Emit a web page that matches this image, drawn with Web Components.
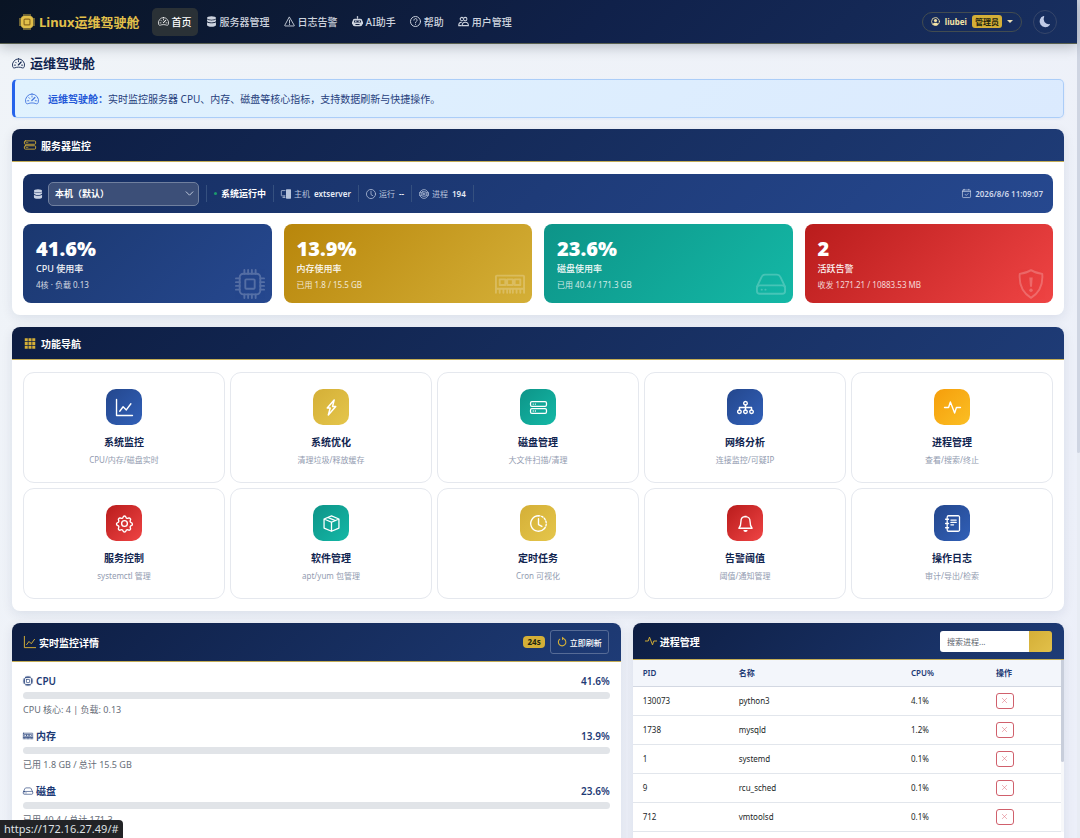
<!DOCTYPE html>
<html lang="zh-CN">
<head>
<meta charset="utf-8">
<meta name="viewport" content="width=device-width, initial-scale=1">
<title>Linux运维驾驶舱</title>
<style>
  html, body { margin: 0; height: 100%; }
  body {
    font-family: "Noto Sans", "Noto Sans CJK SC", sans-serif;
    font-size: 10px;
    color: #10244f;
    --g-blue: linear-gradient(135deg, #24478d, #3160b8);
    --g-gold: linear-gradient(135deg, #d4af37, #e5c64b);
    --g-teal: linear-gradient(135deg, #0d9488, #14b8a6);
    --g-red: linear-gradient(135deg, #b91c1c, #ef4444);
    --g-amber: linear-gradient(135deg, #f59e0b, #fbbf24);
  }
</style>
</head>
<body>
<app-shell>
  <top-nav slot="nav"></top-nav>
  <note-title><ui-icon name="speedometer"></ui-icon>运维驾驶舱</note-title>
  <note-banner><ui-icon slot="icon" name="speedometer"></ui-icon><strong>运维驾驶舱：</strong>实时监控服务器 CPU、内存、磁盘等核心指标，支持数据刷新与快捷操作。</note-banner>

  <page-panel icon="stack">
    <span slot="title">服务器监控</span>
    <status-bar></status-bar>
    <card-grid kind="stats">
      <stat-card tone="blue" icon="cpu"><span slot="value">41.6%</span><span slot="label">CPU 使用率</span><span slot="sub">4核 · 负载 0.13</span></stat-card>
      <stat-card tone="gold" icon="memory"><span slot="value">13.9%</span><span slot="label">内存使用率</span><span slot="sub">已用 1.8 / 15.5 GB</span></stat-card>
      <stat-card tone="teal" icon="hdd"><span slot="value">23.6%</span><span slot="label">磁盘使用率</span><span slot="sub">已用 40.4 / 171.3 GB</span></stat-card>
      <stat-card tone="red" icon="shield"><span slot="value">2</span><span slot="label">活跃告警</span><span slot="sub">收发 1271.21 / 10883.53 MB</span></stat-card>
    </card-grid>
  </page-panel>

  <page-panel icon="grid">
    <span slot="title">功能导航</span>
    <card-grid kind="features">
      <feature-card tone="blue" icon="graph">系统监控<span slot="desc">CPU/内存/磁盘实时</span></feature-card>
      <feature-card tone="gold" icon="lightning">系统优化<span slot="desc">清理垃圾/释放缓存</span></feature-card>
      <feature-card tone="teal" icon="stack">磁盘管理<span slot="desc">大文件扫描/清理</span></feature-card>
      <feature-card tone="blue" icon="diagram">网络分析<span slot="desc">连接监控/可疑IP</span></feature-card>
      <feature-card tone="amber" icon="activity">进程管理<span slot="desc">查看/搜索/终止</span></feature-card>
      <feature-card tone="red" icon="gear">服务控制<span slot="desc">systemctl 管理</span></feature-card>
      <feature-card tone="teal" icon="box">软件管理<span slot="desc">apt/yum 包管理</span></feature-card>
      <feature-card tone="gold" icon="history">定时任务<span slot="desc">Cron 可视化</span></feature-card>
      <feature-card tone="red" icon="bell">告警阈值<span slot="desc">阈值/通知管理</span></feature-card>
      <feature-card tone="blue" icon="journal">操作日志<span slot="desc">审计/导出/检索</span></feature-card>
    </card-grid>
  </page-panel>

  <split-row>
    <page-panel icon="graph" size="tall">
      <span slot="title">实时监控详情</span>
      <refresh-tools slot="tools"></refresh-tools>
      <metric-row icon="cpu">CPU<span slot="value">41.6%</span><span slot="desc">CPU 核心: 4 | 负载: 0.13</span></metric-row>
      <metric-row icon="memory">内存<span slot="value">13.9%</span><span slot="desc">已用 1.8 GB / 总计 15.5 GB</span></metric-row>
      <metric-row icon="hdd">磁盘<span slot="value">23.6%</span><span slot="desc">已用 40.4 / 总计 171.3</span></metric-row>
    </page-panel>
    <page-panel icon="activity" size="medium" flush>
      <span slot="title">进程管理</span>
      <process-search slot="tools"></process-search>
      <process-table></process-table>
    </page-panel>
  </split-row>
  <span slot="hint">https://172.16.27.49/#</span>
</app-shell>

<script>
const line = (body, w = 1) => `<g fill="none" stroke="currentColor" stroke-width="${w}" stroke-linecap="round" stroke-linejoin="round">${body}</g>`;
const cpuPins = '<path d="M5 .5v2M7 .5v2M9 .5v2M11 .5v2M5 13.500v2M7 13.500v2M9 13.500v2M11 13.500v2M.5 5h2M.5 7h2M.5 9h2M.5 11h2M13.500 5h2M13.500 7h2M13.500 9h2M13.500 11h2"/>';
const ICONS = {
  speedometer: line('<path d="M8 2.300A7.400 7.400 0 0 0 .9 12c.3 1.300 1.600 1.800 2.700 1.300 1.400-.6 2.900-.8 4.400-.8s3 .2 4.400.8c1.100.5 2.400 0 2.700-1.300A7.400 7.400 0 0 0 8 2.300zM8 4.500v1.300M3 10h1.300M11.700 10H13M4.400 6.400l.9.900"/><path d="M11.300 6.200 7.800 9.800" stroke-width="1.500"/>', 1.1),
  'cpu-fill': '<rect x="2" y="2" width="12" height="12" rx="3"/>' + line(cpuPins) + '<rect x="4.500" y="4.500" width="7" height="7" rx="1.500" fill="#8d6a1e"/><rect x="5.700" y="5.700" width="4.600" height="4.600" rx=".5"/>',
  cpu: line(cpuPins + '<rect x="2.500" y="2.500" width="11" height="11" rx="2"/><rect x="5.500" y="5.500" width="5" height="5" rx=".5"/>'),
  database: '<ellipse cx="8" cy="3" rx="6.500" ry="2.500"/><path d="M1.500 4.800C2.700 6 5.300 6.500 8 6.500S13.300 6 14.500 4.800V7c0 1.400-2.900 2.500-6.500 2.500S1.500 8.400 1.500 7z"/><path d="M1.500 9c1.200 1.200 3.800 1.600 6.500 1.600s5.300-.4 6.500-1.600v4c0 1.600-2.900 2.700-6.500 2.700S1.500 14.600 1.500 13z"/>',
  warning: line('<path d="M8 1.800 15 13.800a.5.5 0 0 1-.4.700H1.400a.5.500 0 0 1-.4-.7z"/><path d="M8 6v4.500M8 12.300v.2"/>', 1.3),
  robot: '<path d="M8.500 2.400V4H12a3 3 0 0 1 3 3v1h1v4h-1a3 3 0 0 1-3 3H4a3 3 0 0 1-3-3H0V8h1V7a3 3 0 0 1 3-3h3.500V2.400a1.200 1.200 0 1 1 1 0z"/><path d="M3 6.500h10v3H3zM5 11.500h6v1.500H5z" fill="#122142"/><circle cx="5.500" cy="8" r="1"/><circle cx="10.500" cy="8" r="1"/>',
  question: line('<circle cx="8" cy="8" r="7.300"/><path d="M5.700 6a2.300 2.300 0 1 1 3.500 2c-.8.500-1.200.9-1.200 1.800M8 12v.2"/>', 1.4),
  people: line('<circle cx="10.500" cy="4.500" r="2.500"/><path d="M6 14c0-3 1.500-5 4.500-5s4.700 2 4.700 5zM6.500 6.500A2.300 2.300 0 1 1 7.300 3M4.500 14H1c0-3 1.300-4.700 4-4.900"/>', 1.5),
  person: line('<circle cx="8" cy="8" r="7"/>', 1.5) + '<circle cx="8" cy="6.200" r="2.800"/><path d="M3 12.800C4 10.800 5.700 10 8 10s4 .8 5 2.800A7 7 0 0 1 8 15a7 7 0 0 1-5-2.200z"/>',
  moon: '<path d="M6 .3a.8.800 0 0 1 .1.900 7.200 7.200 0 0 0 7.400 10.600.8.800 0 0 1 .8 1.200A8.300 8.300 0 1 1 5.100.1.800.800 0 0 1 6 .3z"/>',
  stack: line('<rect x=".5" y="2.500" width="15" height="4.500" rx="1.300"/><rect x=".5" y="9" width="15" height="4.500" rx="1.300"/><path d="M3 4.800h.1M5 4.800h.1M3 11.300h.1M5 11.300h.1"/>', 1.2),
  grid: '<path d="M1 1.500h4v4H1zM6 1.500h4v4H6zM11 1.500h4v4h-4zM1 6.500h4v4H1zM6 6.500h4v4H6zM11 6.500h4v4h-4zM1 11.500h4v4H1zM6 11.500h4v4H6zM11 11.500h4v4h-4z"/>',
  graph: line('<path d="M.5.5v15h15M3.500 11.500l3.200-4.200 3 3L14 4.500"/>', 1.3),
  lightning: line('<path d="M10.500 1 4 8.500h2.800L5 15l7-8H9z"/>', 1.400),
  diagram: line('<circle cx="8" cy="4" r="1.700"/><circle cx="2.300" cy="12" r="1.700"/><circle cx="8" cy="12" r="1.700"/><circle cx="13.700" cy="12" r="1.700"/><path d="M8 5.700v4.600M2.300 10V8h11.400v2"/>', 1.3),
  activity: line('<path d="M.5 8h3.800L6 2.800l4 10.400L11.700 8h3.800"/>', 1.300),
  gear: line('<circle cx="8" cy="8" r="2.700"/><path d="M6.600 2.200c.4-1.600 2.400-1.600 2.800 0a1.400 1.400 0 0 0 2.100.8c1.400-.8 2.900.7 2 2.100a1.400 1.400 0 0 0 .8 2.100c1.500.4 1.500 2.400 0 2.800a1.400 1.400 0 0 0-.8 2c.8 1.400-.7 2.900-2.100 2a1.400 1.400 0 0 0-2 .9c-.4 1.500-2.400 1.500-2.800 0a1.400 1.400 0 0 0-2.100-.9c-1.400.9-2.900-.6-2-2a1.400 1.400 0 0 0-.9-2.100c-1.500-.4-1.500-2.400 0-2.800a1.400 1.400 0 0 0 .9-2c-.9-1.400.6-2.900 2-2.100a1.400 1.400 0 0 0 2.100-.8z"/>', 1.3),
  box: line('<path d="M8 .8 15 3.800v8.500l-7 3-7-3V3.800zM1 3.800l7 3 7-3M8 6.800v8.500M4.500 2.300l7 3"/>', 1.2),
  clock: line('<circle cx="8" cy="8" r="7.300"/><path d="M8 3.500V9l3 1.700"/>', 1.2),
  history: line('<path d="M8 .7a7.300 7.300 0 1 0 5.500 12.100M8 3.500V9l3.200 1.800"/><path d="M8 .7a7.300 7.300 0 0 1 5.500 12.100" stroke-dasharray="1.400 1.600"/>', 1.3),
  bell: line('<path d="M8 1.500c-2.700 0-4.300 2-4.300 4.500 0 4-1 5.500-1.900 6.500h12.400c-.9-1-1.900-2.500-1.900-6.500 0-2.500-1.600-4.500-4.300-4.500z"/>', 1.3) + '<path d="M6 14h4a2 2 0 0 1-4 0zM7 .8h2V2H7z"/>',
  journal: line('<path d="M3 3V2a1.300 1.300 0 0 1 1.300-1.300h9A1.300 1.300 0 0 1 14.600 2v12a1.300 1.300 0 0 1-1.300 1.300h-9A1.300 1.300 0 0 1 3 14v-1M3 5v2M3 9v2M1.500 4h2.800M1.500 8h2.800M1.500 12h2.800M6.500 4.800h5M6.500 7h5M6.500 9.200h2.500"/>', 1.2),
  memory: line('<path d="M1 3.500h14a.5.500 0 0 1 .5.500v6.500H.5V4a.5.500 0 0 1 .5-.5zM2.500 5.500h3v3h-3zM6.500 5.500h3v3h-3zM10.500 5.500h3v3h-3zM.5 10.500v2.200M2.500 10.500v2.200M4.500 10.500v2.200M6.500 10.500v2.200M8 10.500v2.200M9.500 10.500v2.200M11.500 10.500v2.200M13.500 10.500v2.200M15.500 10.500v2.200"/>', 1),
  hdd: line('<path d="M.6 9.300 3 4.200A2 2 0 0 1 4.800 3h6.400A2 2 0 0 1 13 4.200l2.400 5.100"/><rect x=".5" y="8.700" width="15" height="4.500" rx="1.500"/><path d="M3 11h.1M5 11h.1"/>', 1),
  shield: line('<path d="M8 .6c-1.500 1-3.800 1.700-6 2-.5 5.700 1.200 9.800 6 12.800 4.800-3 6.500-7.100 6-12.800-2.200-.3-4.500-1-6-2z"/>', 1) + '<path d="M7.100 4.500h1.800l-.4 5h-1z"/><circle cx="8" cy="11.300" r=".9"/>',
  pc: '<path d="M8 1.500A1 1 0 0 1 9 .5h6a1 1 0 0 1 1 1v13a1 1 0 0 1-1 1H9a1 1 0 0 1-1-1z"/>' + line('<path d="M6.500 2.500H1.200a.7.700 0 0 0-.7.700v7.100c0 .4.300.7.700.7h5.300M5 11v2.500M3 13.500h3.500"/>', 1.2),
  process: line('<circle cx="8" cy="8" r="7"/><path d="M1 6h3M1 10h3M12 6h3M12 10h3"/><rect x="4.500" y="4.500" width="7" height="7" rx="1.500"/><rect x="7" y="7" width="2" height="2"/>', 1.2),
  calendar: line('<rect x=".8" y="1.800" width="14.400" height="13.400" rx="1.500"/><path d="M1 4.500h14M4 .5v1.300M12 .5v1.300M5.500 9.500l2 2 3.500-3.500"/>', 1.2),
  refresh: line('<path d="M4.500 3.500A6 6 0 1 0 12 3.600"/>', 1.7) + '<path d="M8-.6v5.600l4.200-2.800z"/>',
  x: line('<path d="M3 3l10 10M13 3 3 13"/>', 1.2),
  chevron: line('<path d="M2 5l6 6 6-6"/>', 1.600)
};

/* Base class: clones a template made from the markup each subclass supplies. */
class Base extends HTMLElement {
  constructor() {
    super();
    this.attachShadow({ mode: 'open' });
  }
  connectedCallback() {
    if (this.shadowRoot.childNodes.length) return;
    const t = document.createElement('template');
    t.innerHTML = `<style>*{box-sizing:border-box}:host{display:block;box-sizing:border-box}${this.css()}</style>${this.html()}`;
    this.shadowRoot.append(t.content.cloneNode(true));
  }
  css() { return ''; }
  html() { return '<slot></slot>'; }
}
const define = (name, css, html) => customElements.define(name, class extends Base {
  css() { return css; }
  html() { return typeof html === 'function' ? html(this) : (html || '<slot></slot>'); }
});

define('ui-icon', `:host{display:inline-flex;flex:none;width:var(--icon,11px);height:var(--icon,11px)}
  svg{width:100%;height:100%;overflow:visible}`,
  e => `<svg viewBox="0 0 16 16" fill="currentColor" aria-hidden="true">${ICONS[e.getAttribute('name')]}</svg>`);

define('app-shell', `
  :host{display:grid;grid-template:auto minmax(0,1fr)/minmax(0,1fr) 3px;height:100vh;overflow:hidden;position:relative;background:linear-gradient(135deg,#f0f4f8,#eceff9)}
  main{grid-row:2;grid-column:1;overflow:hidden;padding:0 13px 0 12px;display:flex;flex-direction:column}
  .rail{grid-row:1/3;grid-column:2;background:#e8ecf4}
  .thumb{height:54%;background:#cfd5e2;border-radius:0 0 2px 2px}
  .hint{position:absolute;left:0;bottom:0;background:#222326;color:#dfe1e4;font-size:11px;line-height:18px;padding:0 4px;border-radius:0 4px 0 0}`,
  `<slot name="nav"></slot><main><slot></slot></main><div class="rail"><div class="thumb"></div></div><div class="hint"><slot name="hint"></slot></div>`);

define('top-nav', `
  :host{background:linear-gradient(135deg,#091424 0%,#10214a 55%,#182f60 100%);border-bottom:1px solid #59604f;box-shadow:0 3px 12px rgba(10,22,40,.25);position:relative;z-index:1}
  header{display:flex;align-items:center;height:43px;padding:0 20px 0 19px}
  a{text-decoration:none;color:inherit}
  .brand{display:flex;align-items:center;gap:4px;font-size:13px;font-weight:700;color:#e2c04a;--icon:16px;margin-right:12px;white-space:nowrap}
  nav{display:flex;gap:2px}
  nav a{display:flex;align-items:center;gap:3px;height:28px;padding:0 6px;border-radius:5px;color:#cdd3de;font-weight:500;white-space:nowrap}
  nav a[aria-current]{background:#2a3136;color:#fff}
  .right{margin-left:auto;display:flex;align-items:center;gap:11px}
  button{font:inherit;background:none;padding:0;margin:0}
  .user{display:flex;align-items:center;gap:5px;height:20px;padding:0 8px;border:1px solid #424c50;border-radius:10px;color:#f3e3a6;font-size:8px;font-weight:700;--icon:9px}
  .user b{background:#d4af37;color:#20240f;border-radius:3px;padding:0 3px;line-height:13px;font-weight:700}
  .caret{border:3px solid transparent;border-top-color:#e9dfb8;border-bottom:0}
  .theme{width:24px;height:24px;border:1px solid #36466a;border-radius:50%;color:#c0cbe6;display:grid;place-items:center;--icon:11px}`,
  () => {
    const items = [['speedometer', '首页'], ['database', '服务器管理'], ['warning', '日志告警'], ['robot', 'AI助手'], ['question', '帮助'], ['people', '用户管理']];
    return `<header><a class="brand" href="#"><ui-icon name="cpu-fill"></ui-icon><span>Linux运维驾驶舱</span></a>
      <nav>${items.map(([i, t], n) => `<a href="#"${n ? '' : ' aria-current="page"'}><ui-icon name="${i}"></ui-icon><span>${t}</span></a>`).join('')}</nav>
      <div class="right"><button class="user" type="button"><ui-icon name="person"></ui-icon><span>liubei</span><b>管理员</b><i class="caret"></i></button>
      <button class="theme" type="button" aria-label="切换主题"><ui-icon name="moon"></ui-icon></button></div></header>`;
  });

define('note-title', `
  :host{flex:none}
  h1{margin:10px 0 6px;display:flex;align-items:center;gap:5px;font-size:13px;line-height:19px;font-weight:600;color:#10244f;--icon:13px}`,
  `<h1><slot></slot></h1>`);

define('note-banner', `
  :host{display:flex;flex:none;align-items:center;gap:9px;min-height:39px;padding:0 11px 0 10px;margin-bottom:11px;border:1px solid #abcdf8;border-left:3px solid #2563eb;border-radius:5px;background:linear-gradient(135deg,#e0f2fe,#dbeafe);color:#27407c;--icon:14px;box-shadow:0 1px 3px rgba(37,99,235,.08)}
  ::slotted(ui-icon){color:#4a7be0}
  ::slotted(strong){color:#2358d8;font-weight:700}`,
  `<slot name="icon"></slot><div><slot></slot></div>`);

define('page-panel', `
  :host{background:#fff;border-radius:8px;box-shadow:0 3px 12px rgba(16,36,79,.09);overflow:hidden;margin-bottom:12px;flex:none;min-width:0}
  header{display:flex;align-items:center;height:33px;padding:0 12px;background:linear-gradient(135deg,#0d1d42,#1e3b76);border-bottom:1px solid #c3ac55;--icon:12px}
  :host([size=tall]) header{height:39px}
  :host([size=medium]) header{height:37px}
  :host([size]) h2{gap:3px}
  header>ui-icon,h2 ui-icon{color:#d4af37}
  h2{margin:0;display:flex;align-items:center;gap:5px;color:#fff;font-size:10px;font-weight:700}
  .tools{margin-left:auto}
  .body{padding:12px 11px}
  :host([flush]) .body{padding:0}`,
  e => `<header><h2><ui-icon name="${e.getAttribute('icon')}"></ui-icon><slot name="title"></slot></h2><div class="tools"><slot name="tools"></slot></div></header><div class="body"><slot></slot></div>`);

define('status-bar', `
  :host{display:flex;align-items:center;height:39px;padding:0 10px;margin-bottom:11px;border-radius:8px;background:linear-gradient(135deg,#162e61,#26488f);color:#b8c4dc;font-size:9px;--icon:10px;white-space:nowrap}
  label{display:flex;align-items:center;gap:5px;margin-right:7px;color:#c9d2e3}
  .pick{position:relative;width:151px}
  select{appearance:none;width:100%;height:24px;padding:0 20px 0 6px;border:1px solid #70809f;border-radius:5px;background:#3c4f78;color:#fff;font:inherit;font-weight:600}
  .pick ui-icon{position:absolute;right:5px;top:7px;--icon:9px;pointer-events:none}
  .item{display:flex;align-items:center;gap:4px;height:17px;padding:0 7px;border-left:1px solid #35507f}
  .item.last{border-right:1px solid #35507f}
  .item ui-icon{margin-right:-1px}
  b{color:#e8edf6;font-weight:600;font-size:8px}
  .item span{font-size:8px}
  .item b.big{font-size:9px;color:#fff}
  .dot{width:3px;height:3px;border-radius:50%;background:#1c9a6c}
  time{margin-left:auto;display:flex;align-items:center;gap:4px;font-size:8px;font-weight:600;color:#ced8ea;--icon:9px}`,
  `<label><ui-icon name="database"></ui-icon><div class="pick"><select aria-label="服务器"><option>本机（默认）</option></select><ui-icon name="chevron"></ui-icon></div></label>
   <div class="item"><i class="dot"></i><b class="big">系统运行中</b></div>
   <div class="item"><ui-icon name="pc"></ui-icon><span>主机</span><b>extserver</b></div>
   <div class="item"><ui-icon name="clock"></ui-icon><span>运行</span><b>--</b></div>
   <div class="item last"><ui-icon name="process"></ui-icon><span>进程</span><b>194</b></div>
   <time><ui-icon name="calendar"></ui-icon><span>2026/8/6 11:09:07</span></time>`);

define('card-grid', `
  :host{display:grid}
  :host([kind=stats]){grid-template-columns:repeat(4,minmax(0,1fr));gap:12px}
  :host([kind=features]){grid-template-columns:repeat(5,minmax(0,1fr));gap:5px}`);

define('stat-card', `
  :host{position:relative;padding:13px 13px 12px;border-radius:8px;color:#fff;overflow:hidden}
  :host([tone=blue]){background:linear-gradient(135deg,#1b3870,#26488f)}
  :host([tone=gold]){background:linear-gradient(135deg,#b8860b,#d4af37)}
  :host([tone=teal]){background:var(--g-teal)}
  :host([tone=red]){background:var(--g-red)}
  div{line-height:12px;white-space:nowrap}
  .value{font-size:20px;line-height:24px;font-weight:900}
  .label{font-size:9px;font-weight:500;margin-top:2px;opacity:.95}
  .sub{font-size:8px;margin-top:4px;opacity:.8}
  ui-icon{position:absolute;right:7px;bottom:4px;--icon:30px;opacity:.22}`,
  e => `<div class="value"><slot name="value"></slot></div><div class="label"><slot name="label"></slot></div><div class="sub"><slot name="sub"></slot></div><ui-icon name="${e.getAttribute('icon')}"></ui-icon>`);

define('feature-card', `
  a{display:flex;flex-direction:column;align-items:center;padding:16px 8px;border:1px solid #e5e8ee;border-radius:11px;text-decoration:none;color:#10244f;background:#fff;white-space:nowrap}
  .tile{display:grid;place-items:center;width:36px;height:36px;border-radius:10px;color:#fff;--icon:17px}
  :host([tone=blue]) .tile{background:var(--g-blue)}
  :host([tone=gold]) .tile{background:var(--g-gold)}
  :host([tone=teal]) .tile{background:var(--g-teal)}
  :host([tone=red]) .tile{background:var(--g-red)}
  :host([tone=amber]) .tile{background:var(--g-amber)}
  b{font-size:10px;line-height:14px;font-weight:600;margin-top:10px}
  small{font-size:8px;line-height:12px;margin-top:5px;color:#929bb0}`,
  e => `<a href="#"><span class="tile"><ui-icon name="${e.getAttribute('icon')}"></ui-icon></span><b><slot></slot></b><small><slot name="desc"></slot></small></a>`);

define('split-row', `
  :host{display:grid;grid-template-columns:repeat(12,minmax(0,1fr));gap:12px;flex:none;min-height:280px}
  ::slotted(:first-child){grid-column:span 7}
  ::slotted(:last-child){grid-column:span 5}`);

define('refresh-tools', `
  :host{display:flex;align-items:center;gap:5px}
  .badge{background:#d4af37;color:#20240f;font-size:8px;font-weight:700;line-height:12px;padding:0 4px;border-radius:4px}
  button{display:flex;align-items:center;gap:3px;height:24px;padding:0 6px;border:1px solid #566b96;border-radius:3px;background:none;color:#fff;font:inherit;font-size:8px;font-weight:500;--icon:10px}
  ui-icon{color:#d4af37}`,
  `<span class="badge">24s</span><button type="button"><ui-icon name="refresh"></ui-icon><span>立即刷新</span></button>`);

define('metric-row', `
  :host{margin-bottom:12px}
  .top{display:flex;align-items:center;justify-content:space-between;line-height:14px;font-weight:600;color:#1d3a75;--icon:10px}
  .name{display:flex;align-items:center;gap:3px}
  .bar{height:7px;margin:4px 0;border-radius:4px;background:#e1e4e8}
  .desc{font-size:9px;line-height:14px;color:#666d78}`,
  e => `<div class="top"><span class="name"><ui-icon name="${e.getAttribute('icon')}"></ui-icon><span><slot></slot></span></span><slot name="value"></slot></div><div class="bar"></div><div class="desc"><slot name="desc"></slot></div>`);

define('process-search', `
  form{display:flex;height:21px;width:112px;border-radius:3px;overflow:hidden}
  input{flex:1;min-width:0;border:0;padding:0 7px;background:#fff;font:inherit;font-size:8px;outline:0}
  input::placeholder{color:#5b616b;opacity:1}
  button{width:23px;border:0;background:linear-gradient(135deg,#d4af37,#e2c04a)}`,
  `<form><input type="text" placeholder="搜索进程..." aria-label="搜索进程"><button type="button" aria-label="搜索"></button></form>`);

define('process-table', `
  :host{display:grid;grid-template-columns:minmax(0,1fr) 3px}
  table{width:100%;border-collapse:collapse;table-layout:fixed;font-size:8px;color:#1b1f27}
  th,td{padding:0 0 0 10px;text-align:left;height:29px;border-bottom:1px solid #e2e6ec}
  th{height:26px;background:#f3f6fb;color:#1d3a75;font-weight:600;border-bottom-color:#d3d8e2}
  .pid{width:96px}.cpu{width:85px}.act{width:75px}
  button{display:grid;place-items:center;width:18px;height:16px;padding:0;border:1px solid #d0606c;border-radius:3px;background:#fff;color:#dc6b78;--icon:7px}
  .rail{background:#f7f8fa}
  .thumb{height:102px;background:#c8cedb;border-radius:0 0 2px 2px}`,
  () => {
    const rows = [['130073', 'python3', '4.1%'], ['1738', 'mysqld', '1.2%'], ['1', 'systemd', '0.1%'], ['9', 'rcu_sched', '0.1%'], ['712', 'vmtoolsd', '0.1%']];
    return `<table><thead><tr><th class="pid">PID</th><th>名称</th><th class="cpu">CPU%</th><th class="act">操作</th></tr></thead><tbody>${
      rows.map(r => `<tr>${r.map(c => `<td>${c}</td>`).join('')}<td><button type="button" aria-label="终止 ${r[1]}"><ui-icon name="x"></ui-icon></button></td></tr>`).join('')
    }</tbody></table><div class="rail"><div class="thumb"></div></div>`;
  });
</script>
</body>
</html>
